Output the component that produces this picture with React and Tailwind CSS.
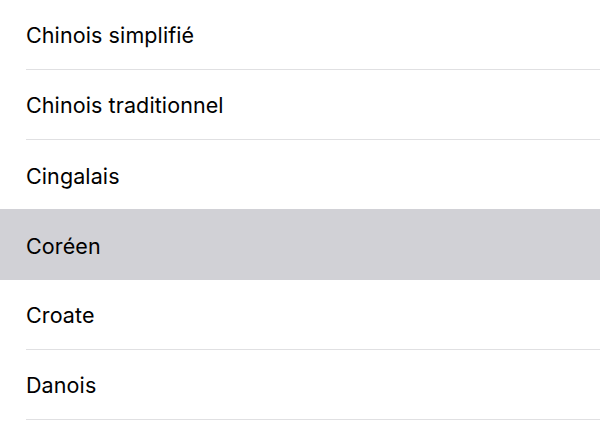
import React from "react";

const languages = [
    "Chinois simplifié",
    "Chinois traditionnel",
    "Cingalais",
    "Coréen",
    "Croate",
    "Danois",
];

const selected = "Coréen";

export default function App() {
    return (
        <div className="w-[600px] h-[424px] overflow-hidden bg-white" style={{ fontFamily: "Inter, 'Noto Sans', sans-serif" }}>
            {languages.map((lang, i) => {
                const isSelected = lang === selected;
                const nextSelected = languages[i + 1] === selected;
                return (
                    <div key={lang} className={isSelected ? "h-[70px] pl-[26px] bg-[#d1d1d6] -mt-px pt-px box-content" : "h-[70px] pl-[26px]"}>
                        <div className={isSelected || nextSelected ? "h-full flex items-center pt-[2px]" : "h-full flex items-center pt-[2px] border-b border-[#e0e0e2]"}>
                            <span className="text-[21.5px] text-black tracking-[0.1px]">{lang}</span>
                        </div>
                    </div>
                );
            })}
        </div>
    );
}
